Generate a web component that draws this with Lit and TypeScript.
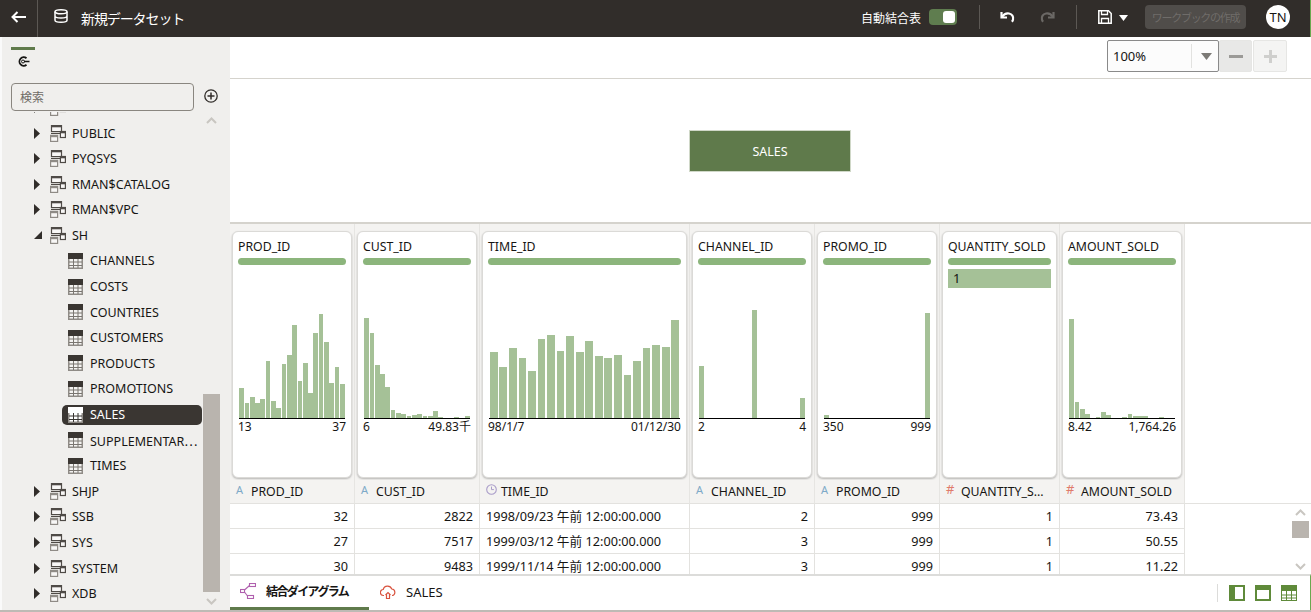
import { LitElement, html, css, svg } from "lit";
import { customElement } from "lit/decorators.js";

type Col = { name: string; width: number; type: "A" | "#" | "t"; bars?: number[]; min?: string; max?: string; gap?: number; value?: string; head?: string; rows: string[]; left?: boolean };

const sparse = (m: Record<number, number>) => Array.from({ length: 20 }, (_, i) => m[i] || 0);

const cols: Col[] = [
  { name: "PROD_ID", width: 125, type: "A", min: "13", max: "37", gap: 0.6, rows: ["32", "27", "30"],
    bars: [30.3, 15, 21.3, 15, 18.7, 57.3, 16.7, 9.7, 53.7, 62.7, 93.3, 36.7, 54.7, 25, 85, 104, 76.3, 34.7, 51, 34] },
  { name: "CUST_ID", width: 125, type: "A", min: "6", max: "49.83千", gap: 0.6, rows: ["2822", "7517", "9483"],
    bars: [100, 85.3, 52.7, 43.7, 31.3, 8.3, 4.7, 4, 1.7, 2.7, 3.7, 1.7, 1.7, 6.7, 1, 0, 0, 0.7, 0, 1.7] },
  { name: "TIME_ID", width: 210, type: "t", min: "98/1/7", max: "01/12/30", gap: 1.8, left: true,
    rows: ["1998/09/23 午前 12:00:00.000", "1999/03/12 午前 12:00:00.000", "1999/11/14 午前 12:00:00.000"],
    bars: [66, 51, 69.7, 60.3, 47, 79.3, 83.3, 67.3, 82, 66, 76.7, 61.7, 60.3, 63.3, 43, 56.7, 69.7, 72.7, 71.3, 98.3] },
  { name: "CHANNEL_ID", width: 125, type: "A", min: "2", max: "4", gap: 0.6, rows: ["2", "3", "3"], bars: sparse({ 0: 51.7, 10: 107.7, 19: 20.3 }) },
  { name: "PROMO_ID", width: 125, type: "A", min: "350", max: "999", gap: 0.6, rows: ["999", "999", "999"], bars: sparse({ 0: 3, 19: 105 }) },
  { name: "QUANTITY_SOLD", head: "QUANTITY_S...", width: 120, type: "#", value: "1", rows: ["1", "1", "1"] },
  { name: "AMOUNT_SOLD", width: 125, type: "#", min: "8.42", max: "1,764.26", gap: 0.6, rows: ["73.43", "50.55", "11.22"],
    bars: sparse({ 0: 98.7, 1: 15.7, 2: 9.3, 3: 3.7, 5: 1.3, 6: 5.7, 7: 2.7, 10: 1.3, 11: 4.3, 12: 2, 13: 2, 14: 2, 17: 1.3 }) },
];

const schemaIcon = svg`<svg class="schema" width="16" height="17" viewBox="0 0 16 17" fill="none">
  <rect x="1.5" y=".6" width="10" height="6" fill="#f8f7f6" stroke="#4f4b47" stroke-width="1.200"/><rect x="1.5" y=".5" width="10" height="1.800" fill="#4f4b47"/>
  <rect x=".6" y="10.4" width="7" height="6" fill="#f8f7f6" stroke="#8f8b86" stroke-width="1.200"/><rect x=".6" y="10.4" width="7" height="1.800" fill="#8f8b86"/>
  <rect x="10.4" y="6.5" width="5" height="6" fill="#f8f7f6" stroke="#4f4b47" stroke-width="1.200"/><rect x="10.4" y="6.5" width="5" height="1.800" fill="#4f4b47"/>
  <path d="M1 8.500h9" stroke="#4f4b47"/></svg>`;

const tableIcon = (on = false) => svg`<svg class="table" width="15" height="16" viewBox="0 0 15 16" fill="none">
  <rect x=".75" y=".75" width="13.5" height="14.5" fill="${on ? "#fff" : "#f4f3f1"}" stroke="#8f8b86" stroke-width="1.500"/>
  <rect x="0" y="0" width="15" height="6" fill="${on ? "#fff" : "#3a3632"}"/>
  <path d="M1 9h13M1 12.500h13M5.500 6v9M10 6v9" stroke="${on ? "#3a3632" : "#7a7671"}"/></svg>`;

const arrowClosed = svg`<svg class="arrow" width="6" height="11" viewBox="0 0 6 11"><path d="M0 0l6 5.500-6 5.500z" fill="#312d2a"/></svg>`;
const arrowOpen = svg`<svg class="arrow" width="8" height="8" viewBox="0 0 8 8"><path d="M8 0v8H0z" fill="#312d2a"/></svg>`;

const chevron = (up: boolean) => svg`<svg width="11" height="7" viewBox="0 0 11 7" fill="none"><path d="${up ? "M1 6l4.500-4.500L10 6" : "M1 1l4.500 4.500L10 1"}" stroke="#c9c6c1" stroke-width="2"/></svg>`;

const clockIcon = svg`<svg width="11" height="11" viewBox="0 0 11 11" fill="none"><circle cx="5.500" cy="5.500" r="4.800" stroke="#a99cc9" stroke-width="1.100"/><path d="M5.500 2.600v3h2.400" stroke="#a99cc9"/></svg>`;

const undoPath = (c: string) => svg`<path d="M1.500 1v5.500H7" stroke="${c}" stroke-width="2.200"/><path d="M2 6C4 3 6.500 2 9 2.500c3 .6 4.800 3.200 4 6.200-.2.800-.6 1.500-1.100 2.100" stroke="${c}" stroke-width="2.200"/>`;

const tree: { t: string; k: "s" | "o" | "l" | "x"; on?: boolean }[] = [
  { t: "", k: "x" }, { t: "PUBLIC", k: "s" }, { t: "PYQSYS", k: "s" }, { t: "RMAN$CATALOG", k: "s" }, { t: "RMAN$VPC", k: "s" }, { t: "SH", k: "o" },
  { t: "CHANNELS", k: "l" }, { t: "COSTS", k: "l" }, { t: "COUNTRIES", k: "l" }, { t: "CUSTOMERS", k: "l" }, { t: "PRODUCTS", k: "l" }, { t: "PROMOTIONS", k: "l" },
  { t: "SALES", k: "l", on: true }, { t: "SUPPLEMENTAR⋯", k: "l" }, { t: "TIMES", k: "l" },
  { t: "SHJP", k: "s" }, { t: "SSB", k: "s" }, { t: "SYS", k: "s" }, { t: "SYSTEM", k: "s" }, { t: "XDB", k: "s" },
];

@customElement("app-root")
export class AppRoot extends LitElement {
  static styles = css`
    :host { display: block; width: 1311px; height: 612px; overflow: hidden; background: #fff; color: #161513;
      font-family: "Noto Sans", "Noto Sans CJK JP", sans-serif; font-size: 12px; }
    * { box-sizing: border-box; }
    svg { display: block; flex: none; }
    .root { display: flex; flex-direction: column; height: 612px; }
    .hdr { height: 37px; flex: none; background: #312d2a; color: #fff; display: flex; align-items: center; border-right: 1px solid #6aa84f; }
    .back { width: 38px; height: 37px; border-right: 1px solid #5c5854; display: flex; align-items: center; justify-content: center; padding-bottom: 4px; }
    .db { margin: 0 0 5px 16px; }
    .title { margin-left: 13px; font-size: 14px; letter-spacing: -1.1px; font-family: "Noto Sans CJK JP", sans-serif; margin-top: -1px; }
    .hr { flex: 1; display: flex; align-items: center; justify-content: flex-end; padding-right: 19px; }
    .auto { font-family: "Noto Sans CJK JP", sans-serif; font-size: 12px; margin-right: 8px; margin-top: -3px; }
    .toggle { width: 28px; height: 16px; border-radius: 4px; background: #5f7d4f; padding: 2px; display: flex; justify-content: flex-end; margin-top: -3px; margin-right: 22px; }
    .knob { width: 12px; height: 12px; background: #fff; border-radius: 3px; }
    .vs { width: 1px; height: 24px; background: #5c5854; margin-top: -3px; }
    .undo { margin: -3px 25px 0 20px; }
    .redo { margin: -3px 21px 0 0; transform: scaleX(-1); }
    .save { margin: -3px 7px 0 21px; }
    .caret { margin: -2px 17px 0 0; }
    .create { width: 101px; height: 24px; background: #504d4a; color: #6f6c69; border-radius: 4px; display: flex; align-items: center; justify-content: center; font-size: 11px; letter-spacing: -1.3px; font-family: "Noto Sans CJK JP", sans-serif; margin-top: -3px; margin-right: 20px; white-space: nowrap; overflow: hidden; }
    .avatar { width: 24px; height: 24px; border-radius: 50%; background: #fff; color: #161513; display: flex; align-items: center; justify-content: center; font-size: 13px; margin-top: -3px; margin-right: 1px; }

    .body { flex: 1; display: flex; min-height: 0; }
    .side { width: 230px; flex: none; background: #f0efed; display: flex; flex-direction: column; border-left: 2px solid #fafafa; font-size: 12.500px; }
    .stab { height: 46px; flex: none; padding: 10px 0 0 9px; }
    .sbar { width: 24px; height: 3px; background: #5f7a4b; }
    .sicon { margin: 6px 0 0 6px; }
    .search { display: flex; align-items: center; padding-left: 9px; height: 28px; flex: none; margin-bottom: 1px; }
    .input { width: 183px; height: 28px; border: 1px solid #8a8680; border-radius: 4px; padding-left: 8px; line-height: 26px; color: #6f6b66; font-family: "Noto Sans CJK JP", sans-serif; font-size: 12px; }
    .plus { margin-left: 10px; margin-top: -3px; }
    .tw { flex: 1; min-height: 0; display: flex; }
    .list { width: 201px; flex: none; overflow: hidden; }
    .row { height: 25.6px; display: flex; align-items: center; white-space: nowrap; }
    .row.x { margin-top: -17.4px; }
    .row .cell-a { width: 48px; padding-left: 32px; flex: none; }
    .row .lbl { margin-left: 6px; }
    .leaf { margin-left: 60px; width: 140px; height: 20px; border-radius: 5px; display: flex; align-items: center; padding-left: 6px; }
    .leaf .lbl { margin-left: 7px; }
    .leaf.on { background: #3a3632; color: #fff; }
    .sc { width: 17px; flex: none; display: flex; flex-direction: column; align-items: center; padding-top: 5px; }
    .thumb { width: 17px; height: 198px; background: #b9b4ae; margin-top: 270px; }
    .sc .dn { margin-top: 6px; }

    .main { flex: 1; min-width: 0; display: flex; flex-direction: column; }
    .zoom { height: 42px; flex: none; border-bottom: 1px solid #d5d3cd; display: flex; justify-content: flex-end; padding: 3px 24px 0 0; }
    .combo { width: 112px; height: 32px; border: 1px solid #8a8a8a; border-radius: 2px; background: #fcfcfc; display: flex; align-items: center; padding-left: 5px; font-size: 13px; }
    .combo .v { width: 78px; }
    .combo .s { width: 1px; height: 24px; background: #e2e2e0; margin-right: 9px; }
    .zb { width: 33px; height: 32px; display: flex; align-items: center; justify-content: center; border: 1px solid #e6e6e4; border-radius: 2px; }
    .zb.m { background: #e8e8e7; }
    .zb.p { background: #f4f4f3; margin-left: 1px; width: 34px; }
    .diagram { height: 145px; flex: none; border-bottom: 2px solid #d5d3cd; display: flex; justify-content: center; padding: 51px 0 0 0; }
    .node { width: 162px; height: 42px; background: #5f7a4b; color: #fff; display: flex; align-items: center; justify-content: center; margin-left: -1px; border: 1px solid #d0d8c8; font-size: 12.500px; }
    .grid { display: flex; }
    .pc { height: 256px; background: #f4f3f1; border-right: 1px solid #e6e5e2; padding: 7px 2px 2px 2px; flex: none; }
    .card { height: 247px; background: #fff; border-radius: 6px; border: 1px solid #dbdad7; box-shadow: 0 1px 2px rgba(0,0,0,.25); padding: 7px 5px; }
    .cname { line-height: 16px; height: 16px; white-space: nowrap; font-size: 12.300px; }
    .pill { height: 7px; margin-top: 3px; border-radius: 3.500px; background: #8cb57c; }
    .value { height: 19px; margin-top: 4px; background: #a5c197; padding-left: 5px; line-height: 19px; font-size: 13px; }
    .chart { height: 154px; margin: 0 1px; border-bottom: 1.500px solid #000; display: flex; align-items: flex-end; }
    .bar { flex: 1; min-width: 0; background: #a5c197; }
    .ends { display: flex; justify-content: space-between; line-height: 16px; }
    .hc { height: 24px; background: #f4f3f1; border-right: 1px solid #e6e5e2; border-bottom: 1px solid #e3e2df; display: flex; align-items: center; padding-left: 6px; flex: none; font-size: 12.300px; }
    .hc .ty { width: 15px; flex: none; font-size: 11px; margin-top: -5px; }
    .ty.a { color: #7eaac8; }
    .ty.n { color: #e07b6c; font-size: 13px; }
    .fill { flex: 1; height: 24px; border-bottom: 1px solid #e3e2df; }
    .rowsw { flex: 1; min-height: 0; display: flex; overflow: hidden; }
    .rows { width: 955px; flex: none; }
    .dr { display: flex; height: 25px; }
    .dc { height: 25px; border-right: 1px solid #e3e2df; border-bottom: 1px solid #e3e2df; text-align: right; padding: 0 6px; line-height: 25px; flex: none; font-size: 12.700px; white-space: nowrap; }
    .dc.l { text-align: left; }
    .tsc { margin-left: auto; margin-right: 1px; width: 19px; display: flex; flex-direction: column; align-items: center; padding-top: 5px; }
    .tthumb { width: 17px; height: 17px; background: #b9b4ae; margin-top: 5px; }
    .tsc .dn { margin-top: 25px; }
    .tabs { height: 36px; flex: none; border-top: 2px solid #dcdcda; border-right: 1px solid #6aa84f; display: flex; align-items: stretch; }
    .tab { display: flex; align-items: center; padding-bottom: 2px; }
    .tab.on { width: 139px; border-bottom: 3px solid #5f7a4b; padding-left: 10px; font-weight: 700; font-family: "Noto Sans CJK JP", sans-serif; letter-spacing: -1.6px; height: 34px; }
    .tab.on span { margin-left: 10px; }
    .tab.o2 { padding-left: 11px; font-size: 13px; }
    .tab.o2 span { margin-left: 10px; }
    .tright { margin-left: auto; display: flex; align-items: center; padding-right: 13px; gap: 10px; }
    .tsep { width: 1px; height: 18px; background: #dcdcda; margin-right: 1px; }
    .strip { height: 2px; flex: none; background: #bdbab5; }
  `;

  render() {
    return html`<div class="root">
      <div class="hdr">
        <div class="back"><svg width="15" height="12" viewBox="0 0 15 12" fill="none"><path d="M15 6H2M6.500 1L1.500 6l5 5" stroke="#fff" stroke-width="2"/></svg></div>
        <svg class="db" width="14" height="14" viewBox="0 0 14 14" fill="none"><g stroke="#fff" stroke-width="1.500"><ellipse cx="7" cy="2.800" rx="6" ry="2"/><path d="M1 2.800v8.400c0 1.100 2.700 2 6 2s6-.9 6-2V2.800M1 7c0 1.100 2.700 2 6 2s6-.9 6-2"/></g></svg>
        <span class="title">新規データセット</span>
        <div class="hr">
          <span class="auto">自動結合表</span>
          <div class="toggle"><div class="knob"></div></div>
          <div class="vs"></div>
          <svg class="undo" width="15" height="12" viewBox="0 0 15 12" fill="none">${undoPath("#fff")}</svg>
          <svg class="redo" width="15" height="12" viewBox="0 0 15 12" fill="none">${undoPath("#6b6865")}</svg>
          <div class="vs"></div>
          <svg class="save" width="14" height="14" viewBox="0 0 14 14" fill="none"><path d="M.8.800h9.700l2.700 2.700v9.700H.8z" stroke="#fff" stroke-width="1.500"/><path d="M3.500 1v3.500h6V1M3.500 13V8.500h7V13" stroke="#fff" stroke-width="1.300"/></svg>
          <svg class="caret" width="9" height="6" viewBox="0 0 9 6"><path d="M0 0h9L4.500 6z" fill="#fff"/></svg>
          <div class="create">ワークブックの作成</div>
          <div class="avatar">TN</div>
        </div>
      </div>
      <div class="body">
        <div class="side">
          <div class="stab"><div class="sbar"></div>
            <svg class="sicon" width="13" height="11" viewBox="0 0 13 11" fill="none"><path d="M9.500 2.200A4.300 4.300 0 1 0 9.500 8.800" stroke="#161513" stroke-width="1.800"/><circle cx="6" cy="5.500" r="1.500" stroke="#161513"/><path d="M7 5.500h5.500" stroke="#161513" stroke-width="1.500"/></svg>
          </div>
          <div class="search"><div class="input">検索</div>
            <svg class="plus" width="14" height="14" viewBox="0 0 14 14" fill="none"><circle cx="7" cy="7" r="6.200" stroke="#312d2a" stroke-width="1.300"/><path d="M7 3.500v7M3.500 7h7" stroke="#312d2a" stroke-width="1.500"/></svg>
          </div>
          <div class="tw">
            <div class="list">
              ${tree.map((r) => r.k === "l"
                ? html`<div class="row"><div class="leaf ${r.on ? "on" : ""}">${tableIcon(r.on)}<span class="lbl">${r.t}</span></div></div>`
                : html`<div class="row ${r.k === "x" ? "x" : ""}"><div class="cell-a">${r.k === "o" ? arrowOpen : arrowClosed}</div>${schemaIcon}${r.t ? html`<span class="lbl">${r.t}</span>` : ""}</div>`)}
            </div>
            <div class="sc">${chevron(true)}<div class="thumb"></div><div class="dn">${chevron(false)}</div></div>
          </div>
        </div>
        <div class="main">
          <div class="zoom">
            <div class="combo"><span class="v">100%</span><span class="s"></span><svg width="11" height="7" viewBox="0 0 11 7"><path d="M0 0h11L5.500 7z" fill="#7c7a76"/></svg></div>
            <div class="zb m"><svg width="14" height="3" viewBox="0 0 14 3"><rect width="14" height="3" fill="#9b9a97"/></svg></div>
            <div class="zb p"><svg width="13" height="13" viewBox="0 0 13 13"><path d="M5 0h3v5h5v3H8v5H5V8H0V5h5z" fill="#cfcfcd"/></svg></div>
          </div>
          <div class="diagram"><div class="node">SALES</div></div>
          <div class="grid">
            ${cols.map((c) => html`<div class="pc" style="width:${c.width}px"><div class="card">
              <div class="cname">${c.name}</div><div class="pill"></div>
              ${c.value ? html`<div class="value">${c.value}</div>` : html`
                <div class="chart">${c.bars!.map((h) => html`<div class="bar" style="height:${h}px;margin:0 ${c.gap! / 2}px"></div>`)}</div>
                <div class="ends"><span>${c.min}</span><span>${c.max}</span></div>`}
            </div></div>`)}
          </div>
          <div class="grid">
            ${cols.map((c) => html`<div class="hc" style="width:${c.width}px">
              ${c.type === "t" ? html`<span class="ty">${clockIcon}</span>` : html`<span class="ty ${c.type === "A" ? "a" : "n"}">${c.type}</span>`}
              <span>${c.head ?? c.name}</span></div>`)}
            <div class="fill"></div>
          </div>
          <div class="rowsw">
            <div class="rows">
              ${[0, 1, 2].map((i) => html`<div class="dr">${cols.map((c) => html`<div class="dc ${c.left ? "l" : ""}" style="width:${c.width}px">${c.rows[i]}</div>`)}</div>`)}
            </div>
            <div class="tsc">${chevron(true)}<div class="tthumb"></div><div class="dn">${chevron(false)}</div></div>
          </div>
          <div class="tabs">
            <div class="tab on">
              <svg width="16" height="16" viewBox="0 0 16 16" fill="none" stroke="#b060ae" stroke-width="1.100"><rect x="9.500" y=".5" width="6" height="3"/><rect x="7.500" y="12.500" width="6" height="3"/><rect x=".5" y="6.500" width="4" height="3"/><path d="M4.500 7L9.500 2.500M4.500 9L7.500 13"/></svg>
              <span>結合ダイアグラム</span>
            </div>
            <div class="tab o2">
              <svg width="16" height="14" viewBox="0 0 16 14" fill="none" stroke="#d9533f" stroke-width="1.200"><path d="M4 10.500H3.500a3 3 0 0 1-.3-6A4.500 4.500 0 0 1 11.800 4a3.300 3.300 0 0 1 .5 6.500H12"/><path d="M5.500 10L8 7.500l2.500 2.500M6.500 9.500v4h3v-4"/></svg>
              <span>SALES</span>
            </div>
            <div class="tright">
              <div class="tsep"></div>
              <svg width="16" height="16" viewBox="0 0 16 16"><rect width="16" height="16" fill="#5f8a3a"/><rect x="6" y="2" width="8" height="12" fill="#fff"/></svg>
              <svg width="16" height="16" viewBox="0 0 16 16"><rect width="16" height="16" fill="#5f8a3a"/><rect x="2" y="5" width="12" height="9" fill="#fff"/></svg>
              <svg width="16" height="16" viewBox="0 0 16 16" fill="none"><rect width="16" height="6" fill="#5f8a3a"/><rect x=".5" y=".5" width="15" height="15" stroke="#5f8a3a"/><path d="M0 10h16M0 13h16M5.500 6v10M10.500 6v10" stroke="#5f8a3a"/></svg>
            </div>
          </div>
        </div>
      </div>
      <div class="strip"></div>
    </div>`;
  }
}
